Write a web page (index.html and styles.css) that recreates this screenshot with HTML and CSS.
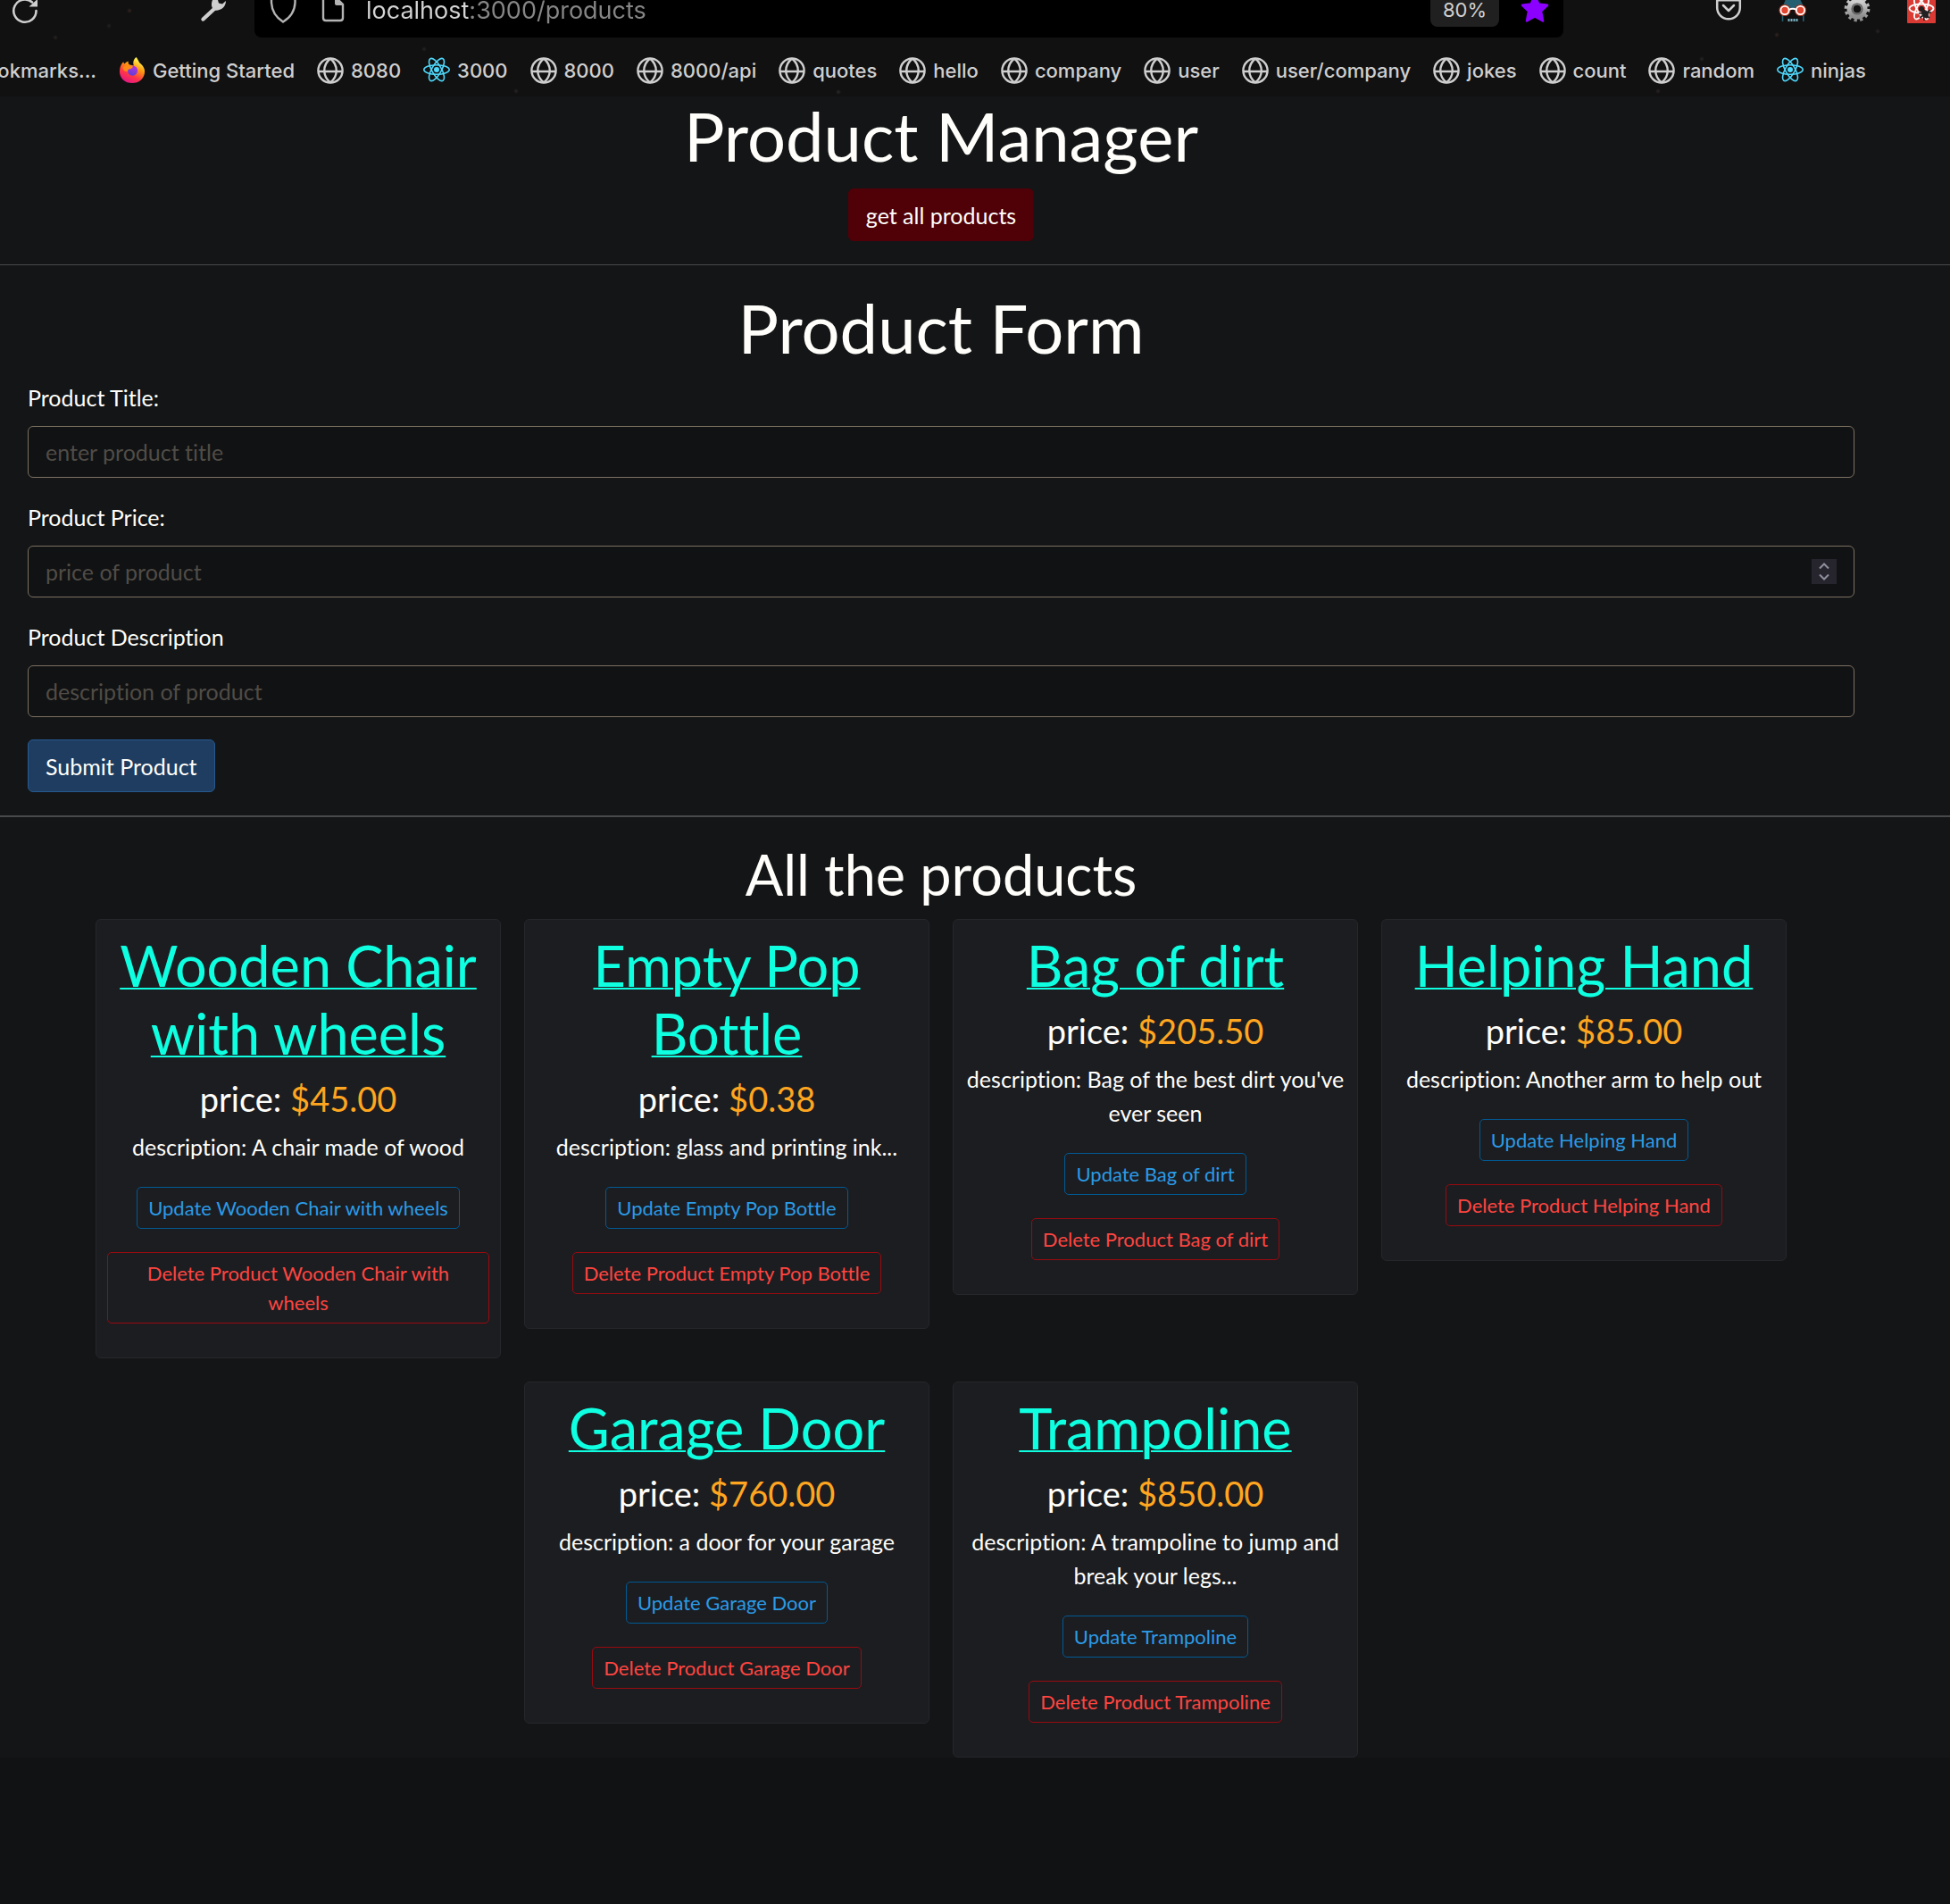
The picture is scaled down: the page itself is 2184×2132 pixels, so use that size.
FILE: index.html
```html
<!DOCTYPE html>
<html lang="en">
<head>
<meta charset="utf-8">
<meta name="viewport" content="width=device-width, initial-scale=1">
<title>Product Manager</title>
<link rel="stylesheet" href="styles.css">
</head>
<body>
<svg class="defs" aria-hidden="true">
  <defs>
    <symbol id="globe" viewBox="0 0 30 30">
      <g fill="none" stroke="#cfcfcf" stroke-width="2.4">
        <circle cx="15" cy="15" r="13.6"/>
        <path d="M15 1.500C6 9 6 21 15 28.500M15 1.500C24 9 24 21 15 28.500M1.500 16H28.500"/>
      </g>
    </symbol>
    <symbol id="react" viewBox="0 0 30 30">
      <g fill="none" stroke="#4fd8fb" stroke-width="1.6">
        <ellipse cx="15" cy="14" rx="14.200" ry="5.300"/>
        <ellipse cx="15" cy="14" rx="14.200" ry="5.300" transform="rotate(60 15 14)"/>
        <ellipse cx="15" cy="14" rx="14.200" ry="5.300" transform="rotate(120 15 14)"/>
      </g>
      <circle cx="15" cy="14" r="3" fill="#4fd8fb"/>
    </symbol>
    <linearGradient id="flame" x1="0.8" y1="0" x2="0.3" y2="1">
      <stop offset="0.1" stop-color="#fff44f"/>
      <stop offset="0.4" stop-color="#ff980e"/>
      <stop offset="0.7" stop-color="#ff3647"/>
      <stop offset="1" stop-color="#e31587"/>
    </linearGradient>
    <linearGradient id="orb" x1="0.7" y1="0" x2="0.3" y2="1">
      <stop offset="0" stop-color="#b833e1"/>
      <stop offset="1" stop-color="#5b3fd6"/>
    </linearGradient>
    <linearGradient id="steel" x1="0" y1="0" x2="0" y2="1">
      <stop offset="0" stop-color="#cfcfcf"/>
      <stop offset="1" stop-color="#8e8e8e"/>
    </linearGradient>
  </defs>
</svg>

<header class="browser">
  <div class="toolbar">
    <div class="nav">
      <button class="tool" aria-label="Reload">
        <svg width="32" height="28" viewBox="12 0 32 28"><path d="M40.500 12A12.600 12.600 0 1 1 36 2.500" fill="none" stroke="#cfcfcf" stroke-width="2.600" stroke-linecap="round"/><path d="M42 -1V7.500H32.500Z" fill="#cfcfcf"/></svg>
      </button>
      <button class="tool" aria-label="Developer tools">
        <svg width="32" height="28" viewBox="223 0 32 28"><path d="M227.500 21.500L241 9" stroke="#cfcfcf" stroke-width="4.400" stroke-linecap="round"/><path d="M238 0C236 5 237 9 240 11.500C247 12.500 253 8 253 1L249 4.500L245 3.500L244 0Z" fill="#cfcfcf"/></svg>
      </button>
    </div>
    <div class="urlbar">
      <svg class="shield" width="30" height="28" viewBox="302 0 30 28"><path d="M304 -2V3C304.500 13 310 20 317 24.500C324.500 20 330 13 330.500 3V-2" fill="none" stroke="#b4b4b4" stroke-width="2.400"/></svg>
      <svg class="doc" width="26" height="28" viewBox="360 0 26 28"><path d="M362 -2V20Q362 23 365 23H381Q384 23 384 20V5L378 -1" fill="none" stroke="#b4b4b4" stroke-width="2.400"/><path d="M375 -1V4Q375 6 377 6H385L378 -1Z" fill="#b4b4b4"/></svg>
      <input class="address" type="text" value="localhost:3000/products" aria-label="Address">
      <button class="zoom">80%</button>
      <button class="tool" aria-label="Edit bookmark">
        <svg width="32" height="28" viewBox="1703 0 32 28"><path d="M1719 -5L1723.300 4.500L1733 5.800L1726 12.500L1728 23.500L1719 18.500L1710 23.500L1712 12.500L1705 5.800L1714.700 4.500Z" fill="#8b00ff" stroke="#8b00ff" stroke-width="2.500" stroke-linejoin="round"/></svg>
      </button>
    </div>
    <div class="extensions">
      <button class="tool" aria-label="Save to Pocket">
        <svg width="32" height="28" viewBox="1920 0 32 28"><path d="M1923.200 8.500V0.200H1948.800V8.500A12.800 12.800 0 0 1 1923.200 8.500Z" fill="none" stroke="#cfcfcf" stroke-width="2.500"/><path d="M1930 6L1936 12L1942 6" fill="none" stroke="#cfcfcf" stroke-width="2.500" stroke-linecap="round" stroke-linejoin="round"/></svg>
      </button>
      <button class="tool" aria-label="Dark mode">
        <svg width="32" height="28" viewBox="1992 0 32 28"><path d="M1996 9L2000 -1H2016L2021 9Z" fill="#235f70"/><path d="M1996.500 17V24M2019.800 17V24" stroke="#235f70" stroke-width="1.600"/><g fill="#e0452f" stroke="#a8321c" stroke-width="4"><circle cx="1999" cy="11.500" r="4.600"/><circle cx="2016.500" cy="11.500" r="4.600"/></g><g fill="#e0452f" stroke="#fff" stroke-width="1.800"><circle cx="1999" cy="11.500" r="4.600"/><circle cx="2016.500" cy="11.500" r="4.600"/><path d="M2003.500 11Q2008 8.500 2012 11" fill="none"/></g><path d="M2002.500 22.500H2014" stroke="#79b5c4" stroke-width="3" stroke-dasharray="2 1"/></svg>
      </button>
      <button class="tool" aria-label="Settings">
        <svg width="32" height="28" viewBox="2064 0 32 28"><circle cx="2080" cy="10" r="12.600" fill="none" stroke="url(#steel)" stroke-width="3.500" stroke-dasharray="3.300 3.300"/><circle cx="2080" cy="10" r="8" fill="none" stroke="url(#steel)" stroke-width="7"/><circle cx="2080" cy="10" r="5.800" fill="none" stroke="#626262" stroke-width="1.600"/><circle cx="2080" cy="10" r="3.800" fill="#111"/></svg>
      </button>
      <button class="tool" aria-label="React Developer Tools">
        <svg width="32" height="28" viewBox="2136 0 32 28"><path d="M2136 0H2168V25Q2168 26 2167 26H2137Q2136 26 2136 25Z" fill="#d93a34"/><g fill="none" stroke="#fff" stroke-width="1.800"><ellipse cx="2152" cy="9.500" rx="13.500" ry="5"/><ellipse cx="2152" cy="9.500" rx="13.500" ry="5" transform="rotate(60 2152 9.500)"/><ellipse cx="2152" cy="9.500" rx="13.500" ry="5" transform="rotate(120 2152 9.500)"/></g><g fill="#222" stroke="#222"><circle cx="2152" cy="10" r="2.600"/><ellipse cx="2156" cy="15.500" rx="3" ry="5" transform="rotate(-35 2156 15.500)"/><path d="M2149 15L2163 14M2150 20L2162 11M2155 23L2154 12M2161 20L2153 14" stroke-width="1.600"/></g></svg>
      </button>
    </div>
  </div>
  <nav class="bookmarks" aria-label="Bookmarks">
    <a class="bookmark first" href="#">ookmarks...</a>
    <a class="bookmark" href="#"><svg viewBox="0 0 30 32"><path d="M20 0C22 3 23 5 24 7C27 9 30 13 30 17C30 25 23.500 31 15 31C6.500 31 0 25 0 17C0 12 2 8 4.500 5.500C5 7 5.500 7.500 6 8C7.500 6 9 5 10.500 5C10 7 10.500 8 12 9L17 10C15.500 6 17 2 20 0Z" fill="url(#flame)"/><circle cx="15.500" cy="16" r="6" fill="url(#orb)"/><path d="M4 12Q8 8 12 10L16 11Q16 13 13 14Q9 14 10 17Q4 18 4 12Z" fill="#ff8a16"/></svg>Getting Started</a>
    <a class="bookmark" href="#"><svg><use href="#globe"/></svg>8080</a>
    <a class="bookmark" href="#"><svg><use href="#react"/></svg>3000</a>
    <a class="bookmark" href="#"><svg><use href="#globe"/></svg>8000</a>
    <a class="bookmark" href="#"><svg><use href="#globe"/></svg>8000/api</a>
    <a class="bookmark" href="#"><svg><use href="#globe"/></svg>quotes</a>
    <a class="bookmark" href="#"><svg><use href="#globe"/></svg>hello</a>
    <a class="bookmark" href="#"><svg><use href="#globe"/></svg>company</a>
    <a class="bookmark" href="#"><svg><use href="#globe"/></svg>user</a>
    <a class="bookmark" href="#"><svg><use href="#globe"/></svg>user/company</a>
    <a class="bookmark" href="#"><svg><use href="#globe"/></svg>jokes</a>
    <a class="bookmark" href="#"><svg><use href="#globe"/></svg>count</a>
    <a class="bookmark" href="#"><svg><use href="#globe"/></svg>random</a>
    <a class="bookmark" href="#"><svg><use href="#react"/></svg>ninjas</a>
  </nav>
</header>

<main class="page">
  <section class="section intro">
    <h1 class="heading">Product Manager</h1>
    <button class="btn btn-danger">get all products</button>
  </section>
  <hr class="rule">
  <section class="section">
    <h1 class="heading">Product Form</h1>
    <form class="form">
      <div class="field">
        <label for="title">Product Title:</label>
        <input class="control" id="title" type="text" placeholder="enter product title">
      </div>
      <div class="field">
        <label for="price">Product Price:</label>
        <div class="number">
          <input class="control" id="price" type="number" placeholder="price of product">
          <svg class="spinner" viewBox="0 0 28 28" aria-hidden="true"><path d="M9 10.500L14 5.500L19 10.500M9 17.500L14 22.500L19 17.500" fill="none" stroke="#8f8f9d" stroke-width="2"/></svg>
        </div>
      </div>
      <div class="field">
        <label for="description">Product Description</label>
        <input class="control" id="description" type="text" placeholder="description of product">
      </div>
      <button class="btn btn-primary" type="button">Submit Product</button>
    </form>
  </section>
  <hr class="rule rule-thick">
  <section class="section">
    <h2 class="subheading">All the products</h2>
    <div class="cards">
      <article class="card">
        <a class="card-title" href="#">Wooden Chair with wheels</a>
        <p class="price">price: <span class="amount">$45.00</span></p>
        <p class="description">description: A chair made of wood</p>
        <button class="btn-sm update">Update Wooden Chair with wheels</button>
        <button class="btn-sm delete">Delete Product Wooden Chair with wheels</button>
      </article>
      <article class="card">
        <a class="card-title" href="#">Empty Pop Bottle</a>
        <p class="price">price: <span class="amount">$0.38</span></p>
        <p class="description">description: glass and printing ink...</p>
        <button class="btn-sm update">Update Empty Pop Bottle</button>
        <button class="btn-sm delete">Delete Product Empty Pop Bottle</button>
      </article>
      <article class="card">
        <a class="card-title" href="#">Bag of dirt</a>
        <p class="price">price: <span class="amount">$205.50</span></p>
        <p class="description">description: Bag of the best dirt you've ever seen</p>
        <button class="btn-sm update">Update Bag of dirt</button>
        <button class="btn-sm delete">Delete Product Bag of dirt</button>
      </article>
      <article class="card">
        <a class="card-title" href="#">Helping Hand</a>
        <p class="price">price: <span class="amount">$85.00</span></p>
        <p class="description">description: Another arm to help out</p>
        <button class="btn-sm update">Update Helping Hand</button>
        <button class="btn-sm delete">Delete Product Helping Hand</button>
      </article>
      <article class="card">
        <a class="card-title" href="#">Garage Door</a>
        <p class="price">price: <span class="amount">$760.00</span></p>
        <p class="description">description: a door for your garage</p>
        <button class="btn-sm update">Update Garage Door</button>
        <button class="btn-sm delete">Delete Product Garage Door</button>
      </article>
      <article class="card">
        <a class="card-title" href="#">Trampoline</a>
        <p class="price">price: <span class="amount">$850.00</span></p>
        <p class="description">description: A trampoline to jump and break your legs...</p>
        <button class="btn-sm update">Update Trampoline</button>
        <button class="btn-sm delete">Delete Product Trampoline</button>
      </article>
    </div>
  </section>
</main>
</body>
</html>
```
FILE: styles.css
```css
* {
  box-sizing: border-box;
}

body {
  margin: 0;
  min-height: 100vh;
  background: #111214;
  color: #fffefa;
  font-family: Lato, sans-serif;
  font-size: 25px;
  line-height: 38px;
  font-variant-ligatures: none;
}

button,
input {
  font: inherit;
  font-variant-ligatures: none;
}

h1,
h2,
p {
  margin: 0;
  font-weight: 400;
}

.defs {
  display: block;
  width: 0;
  height: 0;
}

/* Browser bars */
.browser {
  overflow: hidden;
  font-family: Inter, sans-serif;
  background:
    radial-gradient(circle at 145px 12px, #33251f 0, transparent 3px),
    radial-gradient(circle at 62px 42px, #2c2320 0, transparent 3px),
    radial-gradient(circle at 122px 29px, #222 0, transparent 3px),
    radial-gradient(circle at 475px 55px, #262424 0, transparent 3px),
    radial-gradient(circle at 578px 102px, #2c2423 0, transparent 3px),
    radial-gradient(circle at 939px 103px, #2a2a2a 0, transparent 3px),
    radial-gradient(circle at 1990px 39px, #33251f 0, transparent 3px),
    radial-gradient(circle at 2103px 35px, #2c2423 0, transparent 3px),
    radial-gradient(circle at 1906px 66px, #262626 0, transparent 3px),
    radial-gradient(circle at 1857px 102px, #2c2423 0, transparent 3px),
    #111112;
}

.toolbar {
  display: flex;
  height: 42px;
}

.tool {
  flex: none;
  padding: 0;
  border: 0;
  background: none;
}

.tool svg {
  display: block;
}

.nav {
  display: flex;
  flex: 0 0 285px;
  align-items: flex-start;
  justify-content: space-between;
  padding: 0 30px 0 12px;
}

.urlbar {
  display: flex;
  flex: 1;
  align-items: flex-start;
  min-width: 0;
  padding: 0 16px 0 17px;
  border-radius: 0 0 8px 8px;
  background: #000;
}

.doc {
  margin-left: 28px;
}

.address {
  flex: 1;
  min-width: 0;
  height: 32px;
  margin-left: 24px;
  padding: 0 0 10px;
  border: 0;
  background: linear-gradient(90deg, #d4d4d4 116px, #868686 116px);
  background-clip: text;
  color: transparent;
  font-size: 27px;
  line-height: 22px;
}

.zoom {
  width: 77px;
  height: 30px;
  margin-right: 24px;
  padding: 0 0 8px;
  border: 0;
  border-radius: 0 0 8px 8px;
  background: #202020;
  color: #d0d0d0;
  font-size: 22px;
  line-height: 22px;
}

.extensions {
  display: flex;
  flex: 0 0 433px;
  align-items: flex-start;
  justify-content: flex-end;
  gap: 40px;
  padding-right: 16px;
}

.bookmarks {
  display: flex;
  gap: 25px;
  height: 66px;
  padding-top: 22px;
}

.bookmark {
  display: flex;
  flex: none;
  gap: 8px;
  color: #cfcfcf;
  font-size: 22px;
  font-weight: 500;
  line-height: 30px;
  text-decoration: none;
  white-space: nowrap;
}

.bookmark svg {
  width: 30px;
  height: 30px;
}

.first {
  justify-content: flex-end;
  width: 108px;
}

/* Page */
.page {
  background: #131517;
}

.section {
  padding: 0 107px 0 31px;
}

.intro {
  display: flex;
  flex-direction: column;
  align-items: center;
}

.heading {
  margin-bottom: 15px;
  font-size: 76px;
  line-height: 88px;
  text-align: center;
}

.rule {
  height: 1px;
  margin: 26px 0;
  border: 0;
  background: #47494b;
}

.rule-thick {
  height: 2px;
}

.btn {
  height: 59px;
  padding: 0 19px;
  border: 1px solid;
  border-radius: 6px;
  color: #fffefa;
}

.btn-danger {
  border-color: #500007;
  background: #500007;
}

.btn-primary {
  border-color: #265a92;
  background: #1f3d60;
}

.field {
  display: flex;
  flex-direction: column;
  gap: 13px;
  margin-bottom: 25px;
}

.control {
  display: block;
  width: 100%;
  height: 58px;
  padding: 0 19px;
  border: 1px solid #7d7060;
  border-radius: 6px;
  outline: 0;
  background: #111214;
  color: #fffefa;
  appearance: none;
}

.control::placeholder {
  color: #504c46;
  opacity: 1;
}

.control::-webkit-inner-spin-button {
  appearance: none;
}

.number {
  position: relative;
}

.spinner {
  position: absolute;
  top: 15px;
  right: 20px;
  width: 28px;
  height: 28px;
  background: #26252e;
}

/* Product cards */
.subheading {
  margin-bottom: 12px;
  font-size: 63px;
  line-height: 76px;
  text-align: center;
}

.cards {
  display: flex;
  flex-wrap: wrap;
  align-items: flex-start;
  justify-content: center;
  gap: 26px;
  max-width: 1894px;
  margin: 0 auto;
}

.card {
  display: flex;
  flex: 0 0 454px;
  flex-direction: column;
  align-items: center;
  padding: 13px 12px 38px;
  border: 1px solid #25272a;
  border-radius: 6px;
  background: #1c1d21;
  text-align: center;
}

.card-title {
  margin-bottom: 12px;
  color: #0fffe1;
  font-size: 63px;
  line-height: 76px;
  text-decoration-thickness: 2px;
}

.price {
  margin-bottom: 12px;
  font-size: 38px;
  line-height: 46px;
}

.amount {
  color: #ffa620;
}

.description {
  margin-bottom: 26px;
}

.btn-sm {
  padding: 6px 12px;
  border: 1px solid;
  border-radius: 5px;
  background: none;
  font-size: 22px;
  line-height: 33px;
}

.update {
  margin-bottom: 26px;
  border-color: #005a94;
  color: #2b9be6;
}

.delete {
  border-color: #990a0f;
  color: #ff4540;
}
```
